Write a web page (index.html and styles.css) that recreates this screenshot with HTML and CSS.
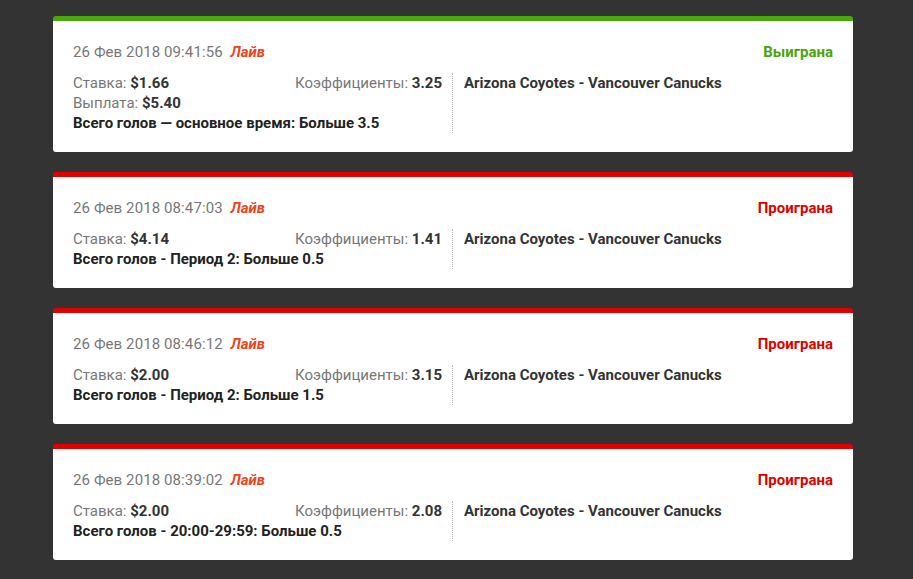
FILE: index.html
```html
<!DOCTYPE html>
<html lang="ru">
<head>
<meta charset="utf-8"/>
<title>История ставок</title>
<link rel="stylesheet" href="styles.css">
</head>
<body>
<div class="bets">

  <div class="bet won">
    <div class="bet-head">
      <div class="bet-date">26 Фев 2018 09:41:56 <span class="live">Лайв</span></div>
      <div class="bet-status">Выиграна</div>
    </div>
    <div class="bet-body">
      <div class="bet-info">
        <div class="row">
          <span>Ставка: <b>$1.66</b></span>
          <span>Коэффициенты: <b>3.25</b></span>
        </div>
        <div class="row">
          <span>Выплата: <b>$5.40</b></span>
        </div>
        <div class="market">Всего голов — основное время: Больше 3.5</div>
      </div>
      <div class="bet-event">Arizona Coyotes - Vancouver Canucks</div>
    </div>
  </div>

  <div class="bet lost">
    <div class="bet-head">
      <div class="bet-date">26 Фев 2018 08:47:03 <span class="live">Лайв</span></div>
      <div class="bet-status">Проиграна</div>
    </div>
    <div class="bet-body">
      <div class="bet-info">
        <div class="row">
          <span>Ставка: <b>$4.14</b></span>
          <span>Коэффициенты: <b>1.41</b></span>
        </div>
        <div class="market">Всего голов - Период 2: Больше 0.5</div>
      </div>
      <div class="bet-event">Arizona Coyotes - Vancouver Canucks</div>
    </div>
  </div>

  <div class="bet lost">
    <div class="bet-head">
      <div class="bet-date">26 Фев 2018 08:46:12 <span class="live">Лайв</span></div>
      <div class="bet-status">Проиграна</div>
    </div>
    <div class="bet-body">
      <div class="bet-info">
        <div class="row">
          <span>Ставка: <b>$2.00</b></span>
          <span>Коэффициенты: <b>3.15</b></span>
        </div>
        <div class="market">Всего голов - Период 2: Больше 1.5</div>
      </div>
      <div class="bet-event">Arizona Coyotes - Vancouver Canucks</div>
    </div>
  </div>

  <div class="bet lost">
    <div class="bet-head">
      <div class="bet-date">26 Фев 2018 08:39:02 <span class="live">Лайв</span></div>
      <div class="bet-status">Проиграна</div>
    </div>
    <div class="bet-body">
      <div class="bet-info">
        <div class="row">
          <span>Ставка: <b>$2.00</b></span>
          <span>Коэффициенты: <b>2.08</b></span>
        </div>
        <div class="market">Всего голов - 20:00-29:59: Больше 0.5</div>
      </div>
      <div class="bet-event">Arizona Coyotes - Vancouver Canucks</div>
    </div>
  </div>

</div>
</body>
</html>
```

FILE: styles.css
```css
body {
  margin: 0;
  background-color: #333333;
  font-family: Roboto, "Liberation Sans", sans-serif;
  font-size: 15px;
  line-height: 20px;
  color: #777777;
}

.bets {
  width: 800px;
  padding: 16px 0 0 53px;
  display: flex;
  flex-direction: column;
  gap: 20px;
}

.bet {
  background-color: #ffffff;
  border-top: 5px solid #4aa80a;
  border-radius: 3px;
  padding: 21px 20px 19px 20px;
}
.bet.lost {
  border-top-color: #e00000;
}

.bet-head {
  display: flex;
  justify-content: space-between;
}
.bet-date {
  letter-spacing: 0.1px;
}
.live {
  margin-left: 4px;
  letter-spacing: 0;
  color: #e8461d;
  font-weight: bold;
  font-style: italic;
}
.bet-status {
  font-weight: bold;
  color: #4aa30b;
}
.lost .bet-status {
  color: #dd0000;
}

.bet-body {
  display: flex;
  margin-top: 11px;
}
.bet-info {
  width: 369px;
  padding-right: 10px;
  border-right: 1px dotted #bbbbbb;
}
.row {
  display: flex;
  justify-content: space-between;
}
b {
  color: #333333;
}
.market {
  font-weight: bold;
  color: #222222;
}
.bet-event {
  padding-left: 11px;
  font-weight: bold;
  color: #333333;
}
```
